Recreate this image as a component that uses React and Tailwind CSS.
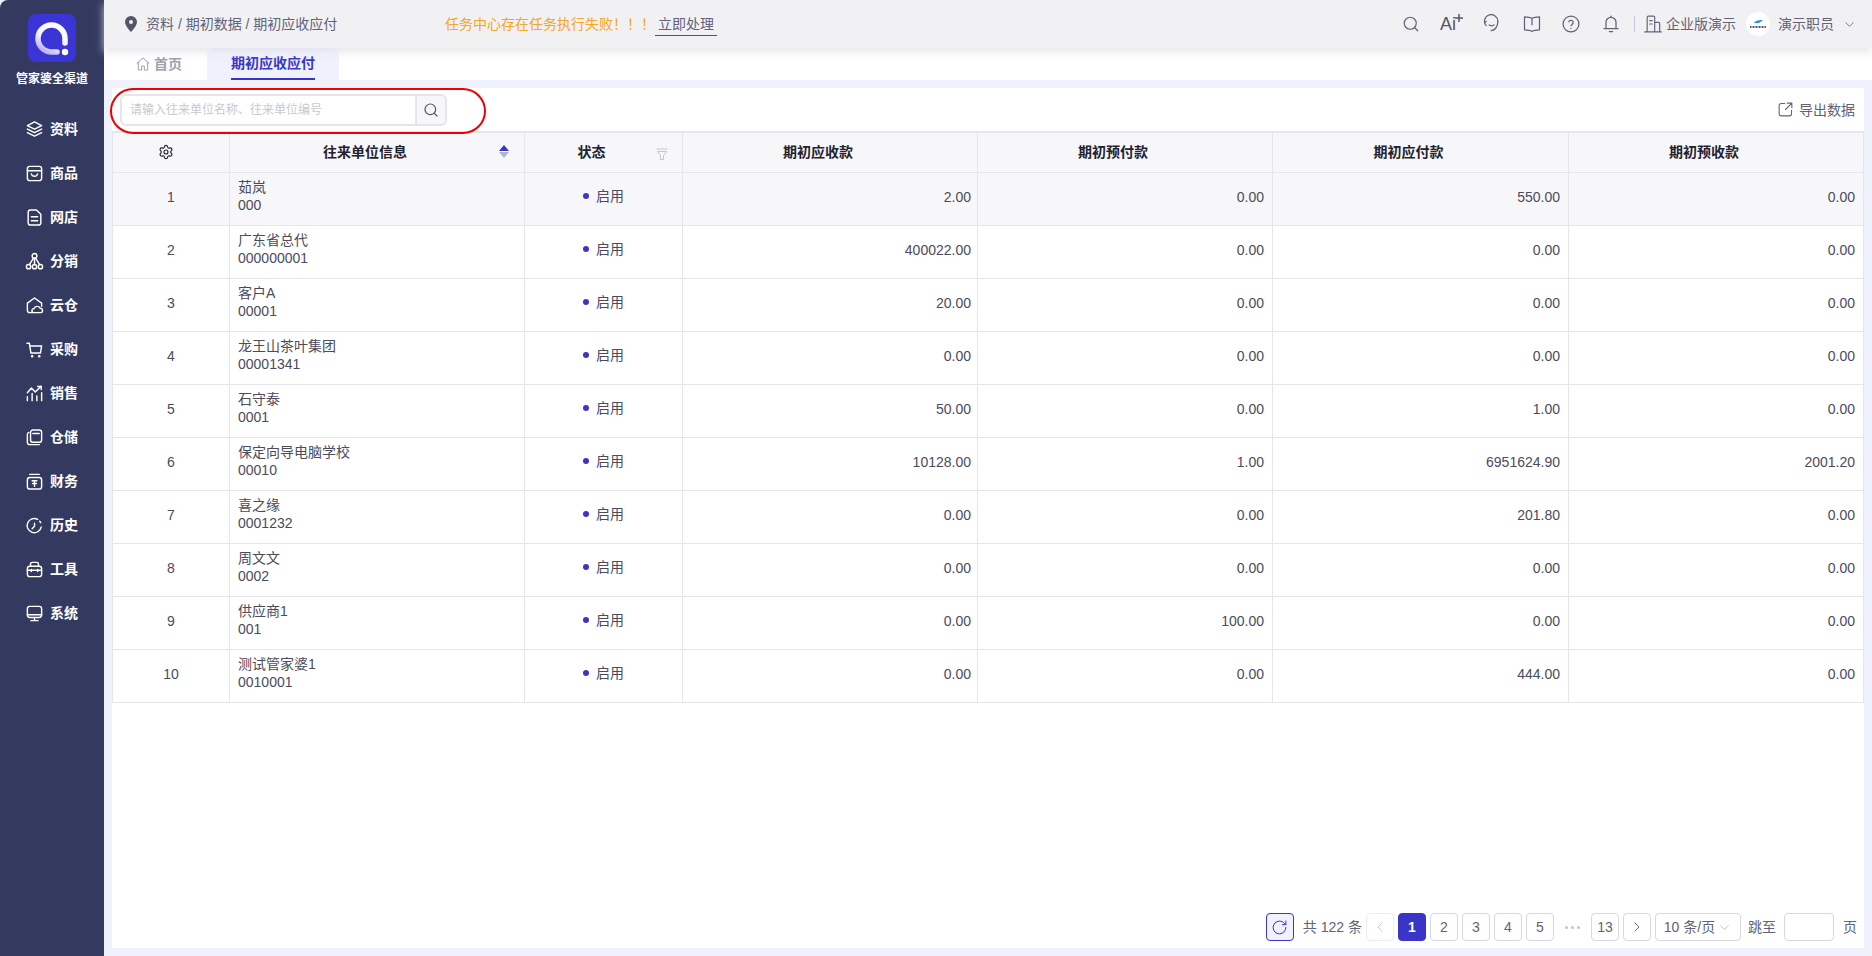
import React from 'react';
import { ChevronDown, ChevronLeft, ChevronRight, RotateCw, Search, Settings } from 'lucide-react';

const Ico = ({ size = 18, sw = 1.6, className = '', children }) => (
    <svg width={size} height={size} viewBox="0 0 24 24" fill="none" stroke="currentColor" strokeWidth={sw} strokeLinecap="round" strokeLinejoin="round" className={className}>
        {children}
    </svg>
);

const navItems = [
    { label: '资料', icon: <><path d="M12 2.500 21 7l-9 4.500L3 7z" /><path d="m3 11.500 9 4.500 9-4.500" /><path d="m3 16 9 4.500 9-4.500" /></> },
    { label: '商品', icon: <><rect x="3" y="3" width="18" height="18" rx="3" /><path d="M3 8.500h18" /><path d="M8 12.500c.6 2 2.200 3 4 3s3.400-1 4-3" /></> },
    { label: '网店', icon: <><path d="M14.500 2.500H7a3 3 0 0 0-3 3v13a3 3 0 0 0 3 3h10a3 3 0 0 0 3-3V8z" /><path d="M8 11h8M8 16h8" /></> },
    { label: '分销', icon: <><circle cx="12" cy="5" r="3" /><circle cx="4.500" cy="18.500" r="2.700" /><circle cx="12" cy="18.500" r="2.700" /><circle cx="19.500" cy="18.500" r="2.700" /><path d="M10.500 8 5.500 16M13.500 8l5 8M12 8v8" /></> },
    { label: '云仓', icon: <><path d="M9 21H6a3 3 0 0 1-3-3V9l9-6.500L21 9v4" /><path d="M11 21a2.500 2.500 0 0 1 .5-5 4 4 0 0 1 7.500-.5 2.800 2.800 0 0 1 1 5.500z" /></> },
    { label: '采购', icon: <><path d="M2.500 4h3l2 12.500h12l1.500-9H6.500" /><circle cx="9" cy="20.500" r=".8" /><circle cx="18" cy="20.500" r=".8" /></> },
    { label: '销售', icon: <><path d="M3 21v-5M9 21v-9M15 21v-6M21 21V11" /><path d="m3 11 5-6 5 5 7-7" /><path d="M16 3h4.500v4" /></> },
    { label: '仓储', icon: <><path d="M5 5.500A2.500 2.500 0 0 0 3 8v10a3 3 0 0 0 3 3h12" /><rect x="7" y="2.500" width="14" height="15.500" rx="3" /><path d="M10 7h8" /></> },
    { label: '财务', icon: <><path d="M6 3h12" /><rect x="3" y="7" width="18" height="14.500" rx="3" /><path d="M9 11h6M12 11v7M9.500 14.500h5" /></> },
    { label: '历史', icon: <><path d="M20.500 14A9 9 0 1 1 16 4.200" /><path d="M12 9v4l-3 3" /><path d="M20 8.500a9 9 0 0 0-1.500-2" /></> },
    { label: '工具', icon: <><path d="M7 8V5a2 2 0 0 1 2-2h6a2 2 0 0 1 2 2v3" /><rect x="3" y="8" width="18" height="13" rx="3" /><path d="M3 13h18M8 12v2.500M16 12v2.500" /></> },
    { label: '系统', icon: <><rect x="3" y="3" width="18" height="14" rx="3" /><path d="M3 13.500h18M12 17v4M7.500 21h9" /></> },
];

const rows = [
    ['茹岚', '000', '2.00', '0.00', '550.00', '0.00'],
    ['广东省总代', '000000001', '400022.00', '0.00', '0.00', '0.00'],
    ['客户A', '00001', '20.00', '0.00', '0.00', '0.00'],
    ['龙王山茶叶集团', '00001341', '0.00', '0.00', '0.00', '0.00'],
    ['石守泰', '0001', '50.00', '0.00', '1.00', '0.00'],
    ['保定向导电脑学校', '00010', '10128.00', '1.00', '6951624.90', '2001.20'],
    ['喜之缘', '0001232', '0.00', '0.00', '201.80', '0.00'],
    ['周文文', '0002', '0.00', '0.00', '0.00', '0.00'],
    ['供应商1', '001', '0.00', '100.00', '0.00', '0.00'],
    ['测试管家婆1', '0010001', '0.00', '0.00', '444.00', '0.00'],
];

const Sidebar = () => (
    <aside className="w-[104px] shrink-0 bg-[#343a5f] rounded-tl-lg flex flex-col items-center text-white">
        <div className="mt-[14px] w-12 h-12 rounded-lg bg-[#3b35d6] flex items-center justify-center">
            <svg width="36" height="36" viewBox="0 0 36 36" fill="none">
                <defs>
                    <linearGradient id="logoRing" x1="0.8" y1="0" x2="0.2" y2="1">
                        <stop offset="0" stopColor="#ffffff" />
                        <stop offset="0.6" stopColor="#f1f0fd" />
                        <stop offset="1" stopColor="#b4b1f0" />
                    </linearGradient>
                </defs>
                <path d="M31 23V18.500A13.500 13.500 0 1 0 17.500 32H23" stroke="url(#logoRing)" strokeWidth="5.500" strokeLinecap="round" />
                <circle cx="31" cy="32" r="3.200" fill="#ffffff" />
            </svg>
        </div>
        <div className="mt-[9px] text-xs leading-4 font-bold whitespace-nowrap">管家婆全渠道</div>
        <nav className="mt-[20px] w-full flex flex-col">
            {navItems.map((item) => (
                <div key={item.label} className="h-11 pl-[25px] flex items-center gap-[6px] text-sm font-bold">
                    <Ico size={19} sw={1.8}>{item.icon}</Ico>
                    <span>{item.label}</span>
                </div>
            ))}
        </nav>
    </aside>
);

const Header = () => (
    <header className="h-12 shrink-0 bg-[#f1f1f4] shadow-[0_4px_8px_rgba(225,225,232,0.8)] relative z-10 flex items-center pl-[20px] pr-[15px] text-sm text-[#62627a]">
        <svg width="14" height="16" viewBox="0 0 14 16" className="shrink-0">
            <path fillRule="evenodd" d="M7 0a6 6 0 0 1 6 6c0 4-6 10-6 10S1 10 1 6a6 6 0 0 1 6-6zm0 4a2 2 0 1 0 0 4 2 2 0 0 0 0-4z" fill="#55556a" />
        </svg>
        <span className="ml-[8px] whitespace-nowrap w-[299px]">资料 / 期初数据 / 期初应收应付</span>
        <span className="text-[#f5a623] whitespace-nowrap">任务中心存在任务执行失败！！！</span>
        <span className="border-b border-[#55556a] px-[3px] leading-[22px]">立即处理</span>
        <div className="ml-auto flex items-center">
            <Search size={18} strokeWidth={1.6} />
            <div className="ml-[20px] flex items-start text-[#55556a]">
                <span className="text-[18px] leading-5">Ai</span>
                <svg width="8" height="8" viewBox="0 0 8 8" className="-ml-px"><path d="M4 0v8M0 4h8" stroke="currentColor" strokeWidth="1.500" /></svg>
            </div>
            <Ico size={20} sw={1.5} className="ml-[19px]"><path d="M5 14a8 8 0 1 1 14-5" /><path d="M19 9c0 5-3 11-8 11" /><path d="M3 10.500 5 9M8.500 13c1.500 1.500 4.500 1.500 6 0" /></Ico>
            <Ico size={20} sw={1.5} className="ml-[20px]"><path d="M12 5.500C10 4 7 3.500 3 3.500v15.500c4 0 7 .5 9 2 2-1.500 5-2 9-2V3.500c-4 0-7 .5-9 2zM12 5.500V13" /></Ico>
            <Ico size={20} sw={1.5} className="ml-[19px]"><circle cx="12" cy="12" r="9.500" /><path d="M9.300 9.300a2.800 2.800 0 0 1 5.400 1c0 1.900-2.700 2.400-2.700 3.700" /><path d="M12 17.300h.01" /></Ico>
            <Ico size={20} sw={1.5} className="ml-[20px]"><path d="M6 17V10a6 6 0 0 1 12 0v7" /><path d="M3.500 17.500h17M10 21h4M12 2.500V4" /></Ico>
            <div className="ml-[13px] w-px h-4 bg-[#c3c6e0]" />
            <Ico size={20} sw={1.4} className="ml-[8px]"><path d="M2 21.500h20M5 21.500V4a1.500 1.500 0 0 1 1.500-1.500h6A1.500 1.500 0 0 1 14 4v17.500M14 10h4.500a1.500 1.500 0 0 1 1.500 1.500v10M8 8h3M8 12h3" /></Ico>
            <span className="ml-[3px] whitespace-nowrap">企业版演示</span>
            <div className="ml-[10px] w-6 h-6 rounded-full bg-white flex flex-col items-center justify-center">
                <svg width="20" height="10" viewBox="0 0 20 10"><path d="M6 4c2-3 6-3 9-3-2 1-3 3-5 3z" fill="#1d8fe0" /><path d="M2 8h16" stroke="#222" strokeWidth="1.500" strokeDasharray="1 .5" /></svg>
            </div>
            <span className="ml-[8px] whitespace-nowrap">演示职员</span>
            <ChevronDown size={15} strokeWidth={1.3} className="ml-[8px]" />
        </div>
    </header>
);

const Tabs = () => (
    <div className="h-8 shrink-0 bg-white flex pl-[31px] text-sm font-bold">
        <div className="flex items-center gap-[3px] text-[#a0a0ae]">
            <Ico size={16} sw={1.5}><path d="M3 11 12 3l9 8" /><path d="M5 9.500V21h5v-6h4v6h5V9.500" /></Ico>
            <span>首页</span>
        </div>
        <div className="ml-[25px] w-[132px] rounded-t-lg bg-[#eff1fd] flex justify-center text-[#3a35c9]">
            <span className="h-8 leading-[31px] border-b-2 border-[#3a35c9]">期初应收应付</span>
        </div>
    </div>
);

const Toolbar = () => (
    <div className="h-[43px] shrink-0 relative flex items-center justify-between pl-2 pr-[9px] text-sm">
        <div className="flex h-8 w-[327px]">
            <div className="flex-1 border-2 border-r-0 border-[#e5e5ea] rounded-l-md pl-2 text-xs leading-7 text-[#c8c8d0]">请输入往来单位名称、往来单位编号</div>
            <div className="w-[32px] border-2 border-[#e5e5ea] rounded-r-md bg-[#f7f7fa] flex items-center justify-center text-[#55556a]">
                <Search size={16} strokeWidth={1.8} />
            </div>
        </div>
        <div className="flex items-center gap-[5px] text-[#62627a]">
            <Ico size={17} sw={1.5}><path d="M11 3.500H6a3 3 0 0 0-3 3V18a3 3 0 0 0 3 3h11.500a3 3 0 0 0 3-3v-5" /><path d="M14.500 3h6.500v6.500M21 3l-9 9" /></Ico>
            <span>导出数据</span>
        </div>
        {/* red marker around the search box */}
        <div className="absolute left-[-2px] top-0 w-[376px] h-[46px] rounded-full border-2 border-[#ee0000] pointer-events-none" />
    </div>
);

const cellCls = 'border border-[#e5e5eb]';

const DataTable = () => (
    <table className="table-fixed border-collapse w-[1751px] text-sm text-[#4b4b5c]">
        <colgroup>
            <col className="w-[117px]" />
            <col className="w-[295px]" />
            <col className="w-[158px]" />
            <col className="w-[295px]" />
            <col className="w-[295px]" />
            <col className="w-[296px]" />
            <col className="w-[295px]" />
        </colgroup>
        <thead>
            <tr className="h-[40px] bg-[#f7f7fa] font-bold text-[#222230] border-t-2 border-[#e5e5eb]">
                <th className={`${cellCls} pr-[10px]`}><Settings size={16} strokeWidth={1.7} className="inline-block -mt-1" /></th>
                <th className={`${cellCls} pr-6`}>
                    <div className="relative">往来单位信息
                        <div className="absolute right-[-9px] top-[3px] flex flex-col gap-[1px]">
                            <span className="w-0 h-0 border-x-[5px] border-x-transparent border-b-[6px] border-b-[#3a35c9]" />
                            <span className="w-0 h-0 border-x-[5px] border-x-transparent border-t-[6px] border-t-[#b5b5c0]" />
                        </div>
                    </div>
                </th>
                <th className={`${cellCls} pr-6`}>
                    <div className="relative">状态
                        <svg width="12" height="12" viewBox="0 0 12 12" fill="none" stroke="#c4c4cc" className="absolute right-[-10px] top-[6px]">
                            <path d="M.5 1h11M1.500 3.500h9L7.500 7.500v4h-3v-4z" />
                        </svg>
                    </div>
                </th>
                <th className={`${cellCls} pr-6`}>期初应收款</th>
                <th className={`${cellCls} pr-6`}>期初预付款</th>
                <th className={`${cellCls} pr-6`}>期初应付款</th>
                <th className={`${cellCls} pr-6`}>期初预收款</th>
            </tr>
        </thead>
        <tbody>
            {rows.map((row, i) => (
                <tr key={row[1]} className={`h-[53px] ${i === 0 ? 'bg-[#f7f7fa]' : 'bg-white'}`}>
                    <td className={`${cellCls} text-center pb-[4px]`}>{i + 1}</td>
                    <td className={`${cellCls} px-2 pb-[5px] leading-[18px]`}>
                        <div>{row[0]}</div>
                        <div>{row[1]}</div>
                    </td>
                    <td className={`${cellCls} text-center pb-[7px]`}>
                        <span className="inline-flex items-center gap-[7px]">
                            <span className="w-[6px] h-[6px] rounded-full bg-[#3a35c9] -mt-[1px]" />启用
                        </span>
                    </td>
                    {row.slice(2).map((v, j) => (
                        <td key={j} className={`${cellCls} text-right pb-[4px] ${j === 0 ? 'pr-[6px]' : 'pr-2'}`}>{v}</td>
                    ))}
                </tr>
            ))}
        </tbody>
    </table>
);

const PageBtn = ({ children, active, className = '' }) => (
    <div className={`w-7 h-7 rounded-[4px] border flex items-center justify-center ${active ? 'bg-[#3a35c9] border-[#3a35c9] text-white font-bold' : 'border-[#d8d8e0] bg-white'} ${className}`}>
        {children}
    </div>
);

const Pagination = () => (
    <div className="mt-auto h-[35px] shrink-0 flex justify-end items-start pr-[7px] text-sm text-[#62627a]">
        <div className="w-7 h-7 rounded-[4px] border border-[#3a35c9] bg-[#eff1fd] text-[#3a35c9] flex items-center justify-center">
            <RotateCw size={17} strokeWidth={1.4} />
        </div>
        <span className="ml-[9px] leading-7 whitespace-nowrap">共 122 条</span>
        <div className="ml-[4px] flex gap-1">
            <PageBtn className="border-[#ebebf0] text-[#c8c8d0]"><ChevronLeft size={16} strokeWidth={1.4} /></PageBtn>
            <PageBtn active>1</PageBtn>
            <PageBtn>2</PageBtn>
            <PageBtn>3</PageBtn>
            <PageBtn>4</PageBtn>
            <PageBtn>5</PageBtn>
            <div className="w-[29px] h-7 flex items-center justify-center gap-[3px]">
                <span className="w-[3px] h-[3px] rounded-full bg-[#c4c4cc]" />
                <span className="w-[3px] h-[3px] rounded-full bg-[#c4c4cc]" />
                <span className="w-[3px] h-[3px] rounded-full bg-[#c4c4cc]" />
            </div>
            <PageBtn>13</PageBtn>
            <PageBtn><ChevronRight size={16} strokeWidth={1.4} /></PageBtn>
        </div>
        <div className="ml-1 w-[86px] h-7 rounded-[4px] border border-[#d8d8e0] flex items-center justify-center gap-[2px] whitespace-nowrap">
            10 条/页<ChevronDown size={15} strokeWidth={1.3} className="text-[#b5b5c0]" />
        </div>
        <span className="ml-[7px] leading-7 whitespace-nowrap">跳至</span>
        <div className="ml-[8px] w-[50px] h-7 rounded-[4px] border border-[#d8d8e0]" />
        <span className="ml-[9px] leading-7">页</span>
    </div>
);

const App = () => {
    return (
        <div className="w-[1872px] h-[956px] overflow-hidden flex bg-[#eff1fd] font-['Liberation_Sans','Noto_Sans_CJK_SC',sans-serif]">
            <Sidebar />
            <div className="flex-1 min-w-0 flex flex-col">
                <Header />
                <Tabs />
                <main className="mt-2 ml-2 mr-2 mb-2 flex-1 min-h-0 bg-white flex flex-col">
                    <Toolbar />
                    <DataTable />
                    <Pagination />
                </main>
            </div>
        </div>
    );
};

export default App;
